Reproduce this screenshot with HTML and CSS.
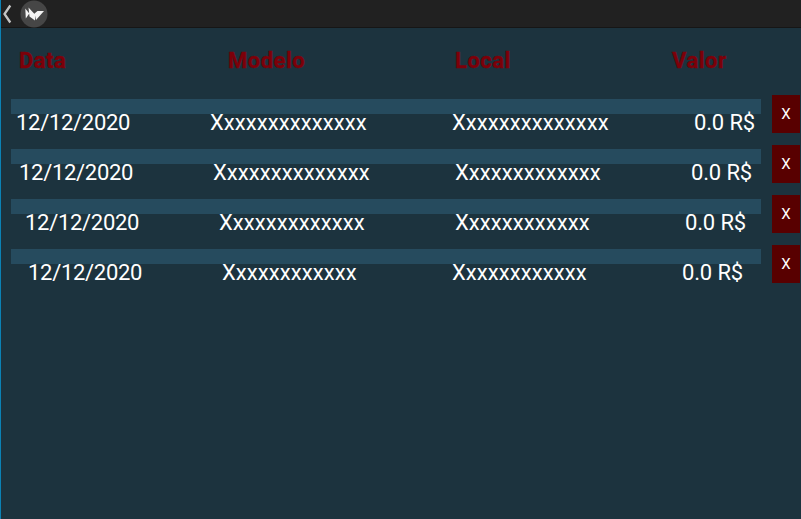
FILE: index.html
```
<!DOCTYPE html>
<html lang="pt">
<head>
<meta charset="utf-8">
<title>Kivy</title>
<link rel="stylesheet" href="styles.css">
</head>
<body>
<header class="bar">
<svg class="back" width="10" height="20" viewBox="0 0 10 20"><path d="M8.300 1.500 2.500 10 8.300 18.500" fill="none" stroke="#c4c4c4" stroke-width="2.300"/></svg>
<svg class="logo" width="28" height="28" viewBox="0 0 28 28"><circle cx="14" cy="14" r="13.500" fill="#464646"/><path d="M5.300 8.500l4 5-3.500 5zM8.500 7.500l6.500 7v6l-5.500-4zM14.500 13.500l3-2.500 6.500 0-8 9z" fill="#f4f4f4"/></svg>
</header>
<div class="head"><b>Data</b><b>Modelo</b><b>Local</b><b>Valor</b></div>
<main class="list">
<div class="row r1"><div class="cells"><span class="date">12/12/2020</span><span>Xxxxxxxxxxxxxx</span><span>Xxxxxxxxxxxxxx</span><span class="price">0.0 R$</span></div><button>X</button></div>
<div class="row r2"><div class="cells"><span class="date">12/12/2020</span><span>Xxxxxxxxxxxxxx</span><span>Xxxxxxxxxxxxx</span><span class="price">0.0 R$</span></div><button>X</button></div>
<div class="row r3"><div class="cells"><span class="date">12/12/2020</span><span>Xxxxxxxxxxxxx</span><span>Xxxxxxxxxxxx</span><span class="price">0.0 R$</span></div><button>X</button></div>
<div class="row r4"><div class="cells"><span class="date">12/12/2020</span><span>Xxxxxxxxxxxx</span><span>Xxxxxxxxxxxx</span><span class="price">0.0 R$</span></div><button>X</button></div>
</main>
</body>
</html>
```
FILE: styles.css
```
* { box-sizing: border-box; }
body { margin: 0; height: 519px; overflow: hidden; background: #1c333e; border-left: 1px solid #0b82b5; font-family: Roboto, sans-serif; color: #fff; }
.bar { height: 28px; background: #212121; display: flex; align-items: center; padding-left: 1px; gap: 8px; border-bottom: 1px solid #161616; }
.head { display: grid; grid-template-columns: 209px 227px 217px 1fr; height: 66px; padding: 19px 0 0 18px; font-size: 22px; line-height: 28px; color: #7c0009; letter-spacing: 0.5px; -webkit-text-stroke: 0.4px #7c0009; }
.row { display: flex; height: 50px; padding-left: 10px; gap: 11px; }
.cells { width: 750px; height: 15px; margin-top: 5px; background: #264b5e; display: grid; grid-template-columns: 194px 242px 242px 1fr; font-size: 22px; line-height: 26px; letter-spacing: 0.08px; padding: 11px 0 0 5px; white-space: nowrap; }
.date { letter-spacing: -0.3px; }
.price { letter-spacing: -0.15px; }
.r2 .cells { padding-left: 8px; grid-template-columns: 194px 242px 236px 1fr; }
.r3 .cells { padding-left: 14px; grid-template-columns: 194px 236px 230px 1fr; }
.r4 .cells { padding-left: 17px; grid-template-columns: 194px 230px 230px 1fr; }
button { width: 28px; height: 38px; margin: 1px 0 0; padding: 0 0 1px; border: 0; background: #580000; color: #fff; font: 15px Roboto, sans-serif; }
```
